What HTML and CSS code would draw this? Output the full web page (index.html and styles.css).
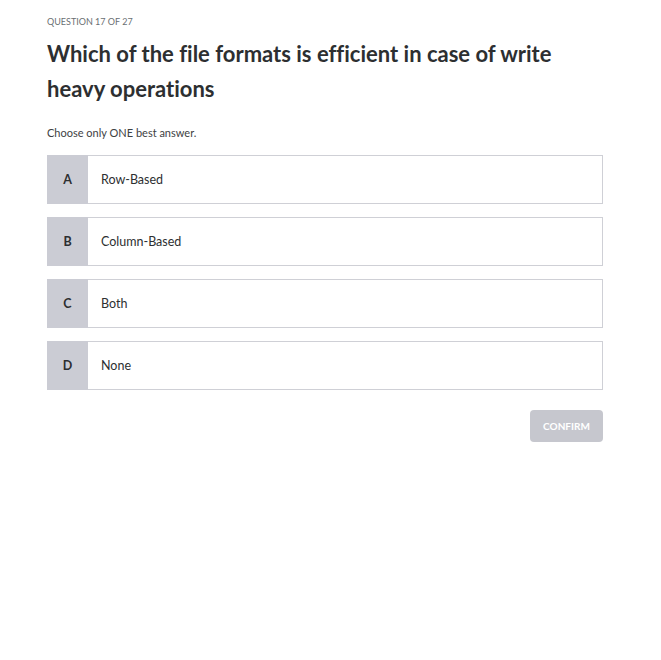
FILE: index.html
```html
<!DOCTYPE html>
<html>
<head>
<meta charset="utf-8">
<link rel="stylesheet" href="styles.css">
</head>
<body>
<div class="quiz">
  <div class="counter">QUESTION 17 OF 27</div>
  <h1 class="title">Which of the file formats is efficient in case of write heavy operations</h1>
  <p class="hint">Choose only ONE best answer.</p>
  <div class="options">
    <div class="option"><div class="letter">A</div><div class="text">Row-Based</div></div>
    <div class="option"><div class="letter">B</div><div class="text">Column-Based</div></div>
    <div class="option"><div class="letter">C</div><div class="text">Both</div></div>
    <div class="option"><div class="letter">D</div><div class="text">None</div></div>
  </div>
  <div class="actions"><button class="confirm">CONFIRM</button></div>
</div>
</body>
</html>
```
FILE: styles.css
```css
html, body { margin: 0; padding: 0; background: #fff; }
body { font-family: Lato, "Open Sans", sans-serif; color: #2d2f31; font-variant-ligatures: none; }
.quiz { width: 556px; padding: 16px 0 0 47px; }
.counter { font-size: 9px; color: #6a6f73; line-height: 12px; }
.title { font-size: 22px; font-weight: 700; line-height: 35px; margin: 8px 0 0; color: #2d2f31; }
.hint { font-size: 11px; color: #3e4143; margin: 20px 0 0; line-height: 14px; }
.options { display: flex; flex-direction: column; gap: 13px; margin-top: 15px; }
.option { display: flex; height: 49px; border: 1px solid #cfd0d6; box-sizing: border-box; }
.letter { width: 41px; margin: -1px 0 -1px -1px; background: #cbccd4; display: flex; align-items: center; justify-content: center; font-size: 12.5px; font-weight: 700; color: #2d2f31; }
.text { display: flex; align-items: center; padding-left: 13px; font-size: 12.5px; color: #2d2f31; }
.actions { display: flex; justify-content: flex-end; margin-top: 20px; }
.confirm { width: 73px; height: 32px; border: 0; border-radius: 4px; background: #c6c7ce; color: #fff; font-family: inherit; font-size: 10px; font-weight: 700; font-variant-ligatures: none; }
```
